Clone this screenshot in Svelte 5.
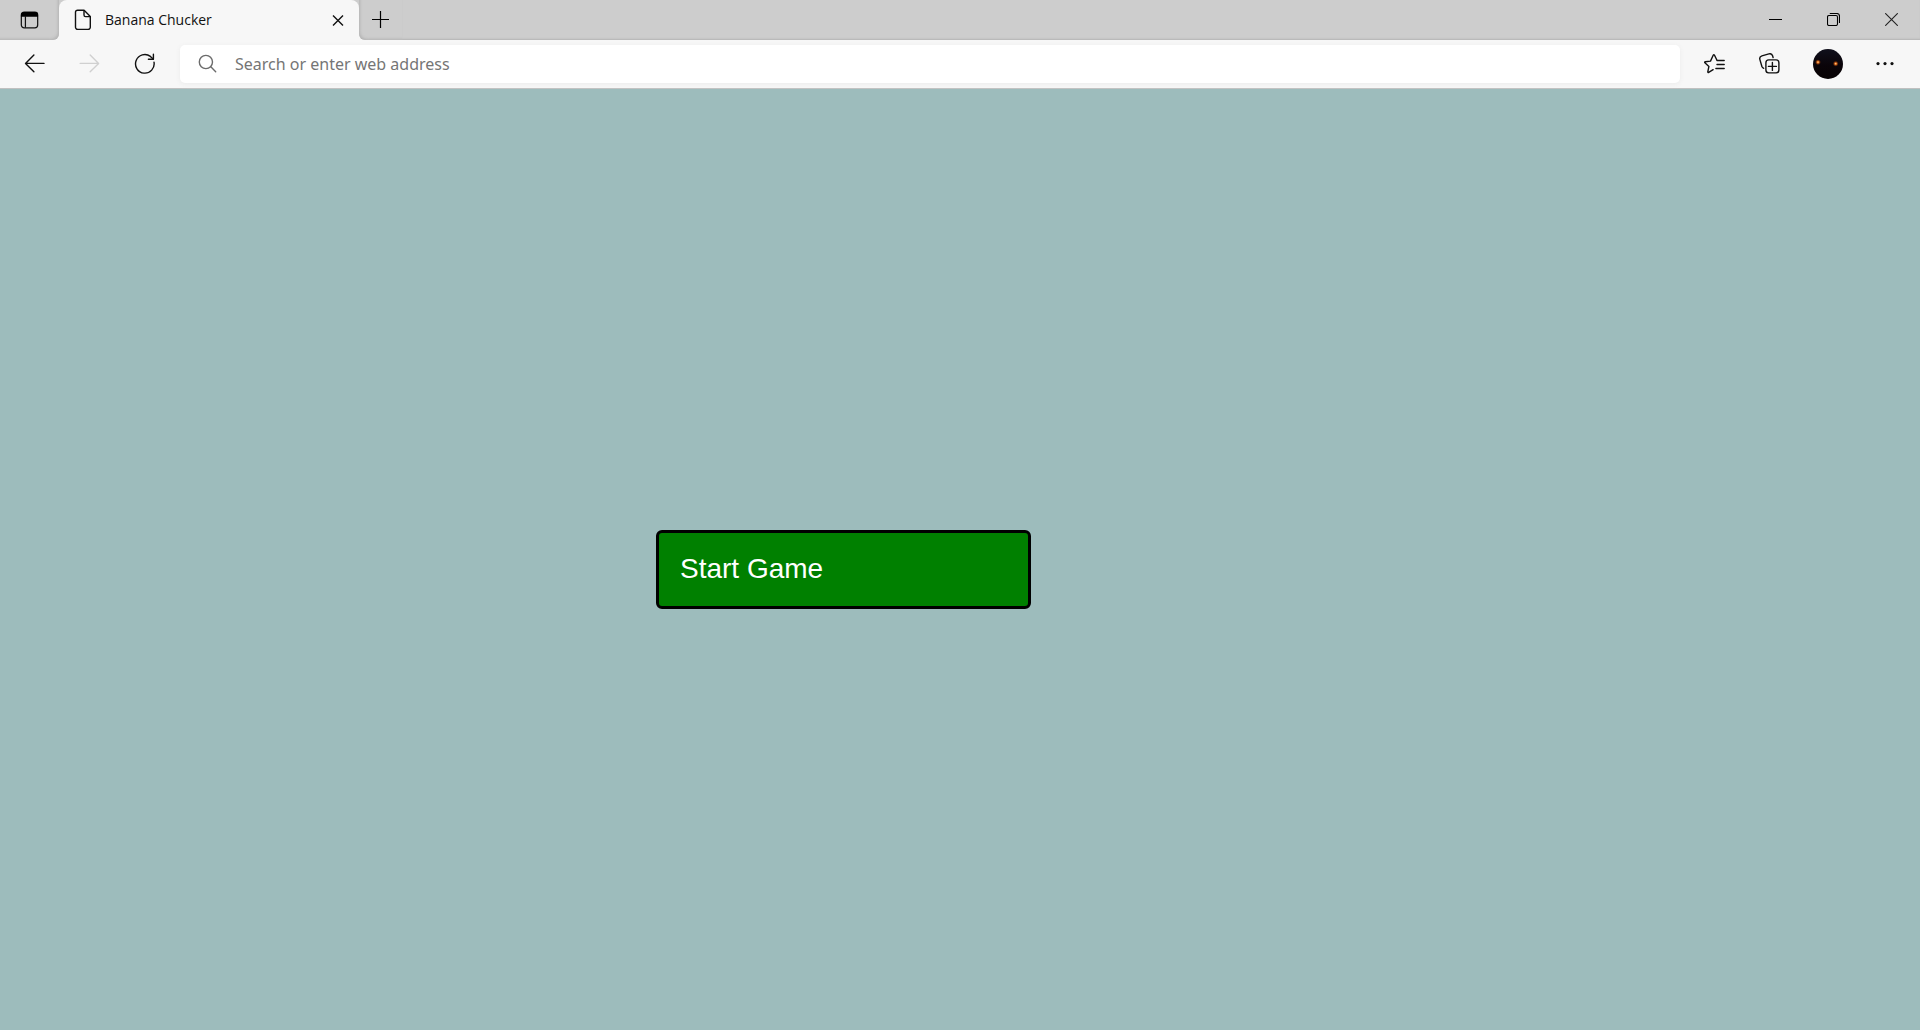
<script>
  let address = $state('');
</script>

<div class="browser">
  <header class="tabstrip">
    <button class="tab-actions" aria-label="Tab actions menu">
      <svg width="19" height="20" viewBox="0 0 20 20" fill="none" stroke="#111" stroke-width="1.3">
        <rect x="1.4" y="1.8" width="17.2" height="16.4" rx="3" />
        <path d="M1 6.5V4.5a3 3 0 0 1 3-3h12a3 3 0 0 1 3 3v2z" fill="#000" stroke="none" />
        <path d="M5.7 6v12" />
      </svg>
    </button>
    <div class="tab">
      <svg width="18" height="22" viewBox="0 0 18 22" fill="none" stroke="#111" stroke-width="1.4" stroke-linejoin="round">
        <path d="M3.5 1.2h6.6l6.2 6.2v10.8a2.2 2.2 0 0 1-2.2 2.2H3.7a2.2 2.2 0 0 1-2.2-2.2V3.2a2 2 0 0 1 2-2z" />
        <path d="M10 1.4V6a1.6 1.6 0 0 0 1.6 1.6h4.6" />
      </svg>
      <span class="title">Banana Chucker</span>
      <button class="close-tab" aria-label="Close tab">
        <svg width="12" height="12" viewBox="0 0 12 12" fill="none" stroke="#111" stroke-width="1.4">
          <path d="M1 1.4l10 10M11 1.4l-10 10" />
        </svg>
      </button>
    </div>
    <button class="new-tab" aria-label="New tab">
      <svg width="17" height="17" viewBox="0 0 17 17" fill="none" stroke="#000" stroke-width="1.2">
        <path d="M8.5 0v17M0 8.5h17" />
      </svg>
    </button>
    <div class="window-controls">
      <button aria-label="Minimize">
        <svg width="13" height="13" viewBox="0 0 13 13" stroke="#000"><path d="M0 6.5h13" /></svg>
      </button>
      <button aria-label="Restore">
        <svg width="13" height="13" viewBox="0 0 13 13" fill="none" stroke="#000" stroke-width="1.1">
          <rect x="0.5" y="2.5" width="10" height="10" rx="1.5" />
          <path d="M2.8 .5h7a2.7 2.7 0 0 1 2.7 2.7v6.8" />
        </svg>
      </button>
      <button aria-label="Close window">
        <svg width="13" height="13" viewBox="0 0 13 13" fill="none" stroke="#222" stroke-width="1.1">
          <path d="M.2 .2l12.6 12.6M12.8 .2L.2 12.8" />
        </svg>
      </button>
    </div>
  </header>

  <nav class="toolbar">
    <button class="tool" aria-label="Back">
      <svg width="21" height="20" viewBox="0 0 21 20" fill="none" stroke="#111" stroke-width="1.4" stroke-linecap="round" stroke-linejoin="round">
        <path d="M20 9.4H1.6M9.9 1L1.5 9.4l8.4 8.4" />
      </svg>
    </button>
    <button class="tool" aria-label="Forward" disabled>
      <svg width="21" height="20" viewBox="0 0 21 20" fill="none" stroke="#d0d0d0" stroke-width="1.4" stroke-linecap="round" stroke-linejoin="round">
        <path d="M1.2 9.4h18.3M11.2 1l8.4 8.4-8.4 8.4" />
      </svg>
    </button>
    <button class="tool" aria-label="Refresh">
      <svg width="21" height="22" viewBox="0 0 21 22" fill="none" stroke="#111" stroke-width="1.4" stroke-linecap="round" stroke-linejoin="round">
        <path d="M20 9.2A9.3 9.3 0 1 1 16.4 3.4l2.8 2.6" />
        <path d="M19.4 1.2v5h-5" />
      </svg>
    </button>

    <label class="address">
      <svg width="19" height="20" viewBox="0 0 19 20" fill="none" stroke="#6b6b6b" stroke-width="1.4" stroke-linecap="round">
        <circle cx="7.9" cy="8" r="6.6" />
        <path d="M12.8 12.8l4.9 4.9" />
      </svg>
      <input type="text" aria-label="Address" placeholder="Search or enter web address" bind:value={address} />
    </label>

    <button class="tool" aria-label="Favorites">
      <svg width="21" height="22" viewBox="0.5 0.8 21 22" fill="none" stroke="#111" stroke-width="1.4" stroke-linecap="round" stroke-linejoin="round">
        <path d="M9.6 17.5l-4.4 2.7c-.5.3-1 0-.9-.6l1.1-5.4-4-3.6c-.5-.4-.3-1 .4-1.1l5.2-.6 2.8-6.1c.3-.5.9-.5 1.1 0l2.3 4.8" />
        <path d="M13.5 8.3h7.2M13.5 12.3h7.2M12.4 16.3h8.3" />
      </svg>
    </button>
    <button class="tool" aria-label="Collections">
      <svg width="21" height="22" viewBox="0.7 0.4 21 22" fill="none" stroke="#111" stroke-width="1.4" stroke-linecap="round" stroke-linejoin="round">
        <path d="M5.4 15.7a3 3 0 0 1-1.8-1.8L1.6 7a3 3 0 0 1 2-3.7l7-2a3 3 0 0 1 3.7 1.9l.5 1.8" />
        <rect x="7.6" y="7.3" width="13" height="13" rx="2.8" />
        <path d="M14.1 9.8v8M10.1 13.8h8" />
      </svg>
    </button>
    <button class="tool profile" aria-label="Profile">
      <svg width="30" height="30" viewBox="0 0 30 30">
        <defs>
          <radialGradient id="glow">
            <stop offset="0" stop-color="#ffe0a0" />
            <stop offset=".35" stop-color="#e06c1c" />
            <stop offset="1" stop-color="#5e1c00" stop-opacity="0" />
          </radialGradient>
          <linearGradient id="night" x2="0" y2="1">
            <stop offset="0" stop-color="#10101c" />
            <stop offset=".55" stop-color="#0a0409" />
            <stop offset="1" stop-color="#080203" />
          </linearGradient>
        </defs>
        <circle cx="15" cy="15" r="15" fill="url(#night)" />
        <circle cx="5" cy="13.2" r="3" fill="url(#glow)" />
        <circle cx="22.7" cy="14.7" r="3" fill="url(#glow)" />
      </svg>
    </button>
    <button class="tool more" aria-label="Settings and more">
      <svg width="18" height="4" viewBox="0 0 18 4" fill="#111">
        <circle cx="2" cy="1.6" r="1.6" /><circle cx="9" cy="1.6" r="1.6" /><circle cx="16" cy="1.6" r="1.6" />
      </svg>
    </button>
  </nav>

  <main class="page">
    <button class="start">Start Game</button>
  </main>
</div>

<style>
  :global(body) {
    margin: 0;
  }
  .browser {
    display: flex;
    flex-direction: column;
    min-height: 100vh;
    font-family: 'Open Sans', 'Noto Sans', sans-serif;
    background: #f7f7f7;
  }
  button {
    display: flex;
    align-items: center;
    justify-content: center;
    padding: 0;
    border: 0;
    background: none;
    font: inherit;
    color: inherit;
  }
  svg {
    display: block;
    flex: none;
  }
  .tabstrip {
    display: flex;
    height: 40px;
    background: #f7f7f7;
  }
  .tab-actions {
    width: 59px;
    background: #cdcdcd;
    border-radius: 0 0 6px 0;
    box-shadow: inset -2px -2px 3px -1px #b4b4b4;
  }
  .tab {
    display: flex;
    align-items: center;
    box-sizing: border-box;
    width: 300px;
    padding: 0 13px 0 15px;
    gap: 13px;
    background: #f7f7f7;
    border-radius: 8px 8px 0 0;
    box-shadow: 0 -8px 0 #cdcdcd;
  }
  .title {
    flex: 1;
    font-size: 14px;
    line-height: 20px;
    color: #111;
    white-space: nowrap;
  }
  .close-tab {
    width: 16px;
    height: 24px;
  }
  .new-tab {
    width: 43px;
    padding-bottom: 1px;
    background: #cdcdcd;
    border-radius: 0 0 0 6px;
    box-shadow: inset 2px -2px 3px -1px #b4b4b4;
  }
  .window-controls {
    display: flex;
    flex: 1;
    gap: 1px;
    justify-content: flex-end;
    padding-bottom: 1px;
    background: #cdcdcd;
    box-shadow: inset 0 -2px 2px -1px #b4b4b4;
  }
  .window-controls button {
    width: 57px;
  }
  .toolbar {
    display: flex;
    align-items: center;
    height: 48px;
    padding: 0 9px 0 7px;
    background: #f7f7f7;
    border-bottom: 1px solid #c0c0c0;
  }
  .tool {
    flex: none;
    width: 55px;
    height: 38px;
  }
  .profile {
    width: 62px;
  }
  .more {
    width: 52px;
  }
  .address {
    display: flex;
    flex: 1;
    align-items: center;
    gap: 18px;
    height: 38px;
    margin: 0 7px 0 8px;
    padding: 0 18px;
    box-sizing: border-box;
    background: #fff;
    border-radius: 5px;
    box-shadow: 0 1px 5px #ebebeb;
  }
  input {
    flex: 1;
    min-width: 0;
    padding: 0;
    border: 0;
    outline: 0;
    background: none;
    font-family: 'Noto Sans', 'Open Sans', sans-serif;
    font-size: 16px;
    line-height: 24px;
    color: #111;
  }
  input::placeholder {
    color: #757575;
    opacity: 1;
  }
  .page {
    flex: 1;
    display: grid;
    grid-template-columns: 656fr 375px 889fr;
    grid-template-rows: 441fr auto 421fr;
    background: #9dbcbc;
  }
  .start {
    grid-area: 2 / 2;
    justify-content: flex-start;
    padding: 20px 21px 21px;
    border: 3px solid #000;
    border-radius: 6px;
    background: #008000;
    color: #fff;
    font-family: 'Liberation Sans', Arial, sans-serif;
    font-size: 28px;
    line-height: 32px;
  }
</style>
